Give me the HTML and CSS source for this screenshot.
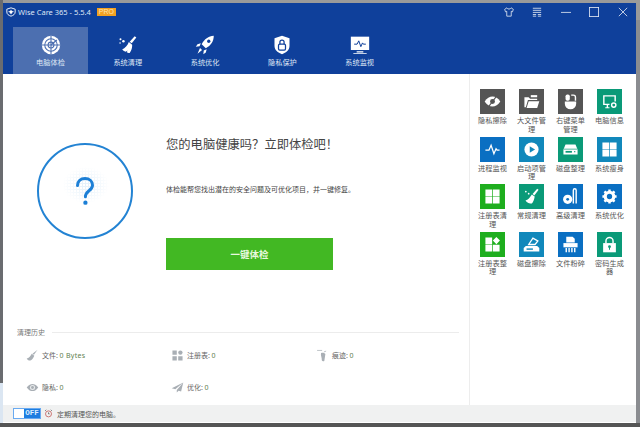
FILE: index.html
```html
<!DOCTYPE html>
<html lang="zh">
<head>
<meta charset="utf-8">
<title>Wise Care 365</title>
<link rel="stylesheet" href="styles.css">
</head>
<body>
<div class="desktop">
<div class="window">
  <header class="head">
    <div class="titlebar">
      <svg class="logo" viewBox="0 0 12 12"><path d="M6 1 11 2.600V6c0 2.600-2.200 4.200-5 5C3.200 10.200 1 8.600 1 6V2.600Z" fill="none" stroke="#fff" stroke-width="1.100"/><path d="M3 5.500h6M6 3.500v5" stroke="#fff"/><circle cx="6" cy="6" r="1.800" fill="#fff"/></svg>
      <span class="apptitle">Wise Care 365 - 5.5.4</span>
      <span class="pro">PRO</span>
      <div class="winbtns">
        <svg class="wb" viewBox="0 0 12 12"><path d="M3.500 1 .8 2.800l1 3 1.500-.6V11h5.400V5.200l1.500.6 1-3L8.500 1C7.500 3 4.500 3 3.500 1Z" fill="none" stroke="#fff"/></svg>
        <svg class="wb" viewBox="0 0 12 12"><path d="M1 1.500h10M1 4h10M1 6.500h10M1 9h4M7 9h4M1 11h4M7 11h4" stroke="#fff" fill="none"/></svg>
        <svg class="wb" viewBox="0 0 12 12"><path d="M0 6.500h12" stroke="#fff" fill="none"/></svg>
        <svg class="wb" viewBox="0 0 12 12"><rect x=".5" y=".5" width="11" height="11" fill="none" stroke="#fff"/></svg>
        <svg class="wb" viewBox="0 0 12 12"><path d="M1 1l10 10M11 1 1 11" stroke="#fff" fill="none"/></svg>
      </div>
    </div>
    <nav class="tabs">
      <div class="tab active">
        <svg class="tabicon" viewBox="0 0 24 24"><circle cx="12" cy="12" r="11" fill="#fff"/><path d="M12 1v22M1 12h22" stroke="#4c6fb0" stroke-width="1.300"/><circle cx="12" cy="12" r="7.500" fill="none" stroke="#4c6fb0" stroke-width="1.300"/><circle cx="12" cy="12" r="3.500" fill="none" stroke="#4c6fb0" stroke-width="1.300"/><path d="M12 12 19 6" stroke="#4c6fb0" stroke-width="1.500"/></svg>
        <span>电脑体检</span>
      </div>
      <div class="tab">
        <svg class="tabicon" viewBox="0 0 24 24"><path d="M20 1.500 22 3l-5.500 7-2.500-2Z" fill="#fff"/><path d="M13 8.500l4 3.200c.2 3-.8 7-3 10-2-.2-2.500-.5-3.500-1l1-2-2.200 1.500c-1.500-.5-3-1.300-4.300-2.700C8.500 16 11.500 12.500 13 8.500Z" fill="#fff"/><circle cx="3" cy="5" r="1.200" fill="#fff"/><circle cx="6.500" cy="7.500" r="1.500" fill="#fff"/><circle cx="2.500" cy="9.500" r=".9" fill="#fff"/></svg>
        <span>系统清理</span>
      </div>
      <div class="tab">
        <svg class="tabicon" viewBox="0 0 24 24"><path d="M22.500 1C16 1.500 11.500 5 8 11l5 5c6-3.500 9.500-8 9.500-15Z" fill="#fff"/><circle cx="16.500" cy="7.500" r="2" fill="#0f409b"/><path d="M7 10 3 11l-2 3 4.500-.5ZM14 17l-1 4-3 2 .5-4.500ZM6 15.500l2.500 2.500-5.500 4.500Z" fill="#fff"/></svg>
        <span>系统优化</span>
      </div>
      <div class="tab">
        <svg class="tabicon" viewBox="0 0 24 24"><path d="M12 1 21 4v9c0 5-4 8.500-9 10-5-1.500-9-5-9-10V4Z" fill="#fff"/><rect x="7.800" y="11" width="8.400" height="7" rx="1.500" fill="none" stroke="#0f409b" stroke-width="1.500"/><path d="M9.500 11V8.500a2.500 2.500 0 0 1 5 0V11" fill="none" stroke="#0f409b" stroke-width="1.500"/></svg>
        <span>隐私保护</span>
      </div>
      <div class="tab">
        <svg class="tabicon" viewBox="0 0 24 24"><rect x="1" y="2" width="22" height="16" fill="#fff"/><path d="M5 11h3.500l2-4 2.500 7 2-4.500 1 1.500h3" fill="none" stroke="#0f409b" stroke-width="1.200"/><path d="M8 19.500h8V21H8ZM4 21.500h16v1H4Z" fill="#fff"/></svg>
        <span>系统监视</span>
      </div>
    </nav>
  </header>
  <div class="body">
    <main class="main">
      <section class="hero">
        <div class="ring">
          <div class="dots"></div>
          <svg class="qmark" viewBox="0 0 24 36"><path d="M3 11.500C3 6 7 3 12 3s9 3 9 8c0 3.500-2 5-4.500 7C14 20 12.500 21 12.500 25" fill="none" stroke="#1c7fd6" stroke-width="3.600" stroke-linecap="round"/><circle cx="12.500" cy="32" r="2.600" fill="#1c7fd6"/></svg>
        </div>
        <div class="herotext">
          <h1>您的电脑健康吗？立即体检吧！</h1>
          <p>体检能帮您找出潜在的安全问题及可优化项目，并一键修复。</p>
          <button class="cta">一键体检</button>
        </div>
      </section>
      <section class="history">
        <div class="histhead"><span>清理历史</span><i></i></div>
        <div class="histgrid">
          <div class="hitem"><svg viewBox="0 0 18 18"><path d="M16 1l-5 7-2-1.500Z" fill="#a9afb5"/><path d="M8 6.500l3.500 3C10 13 8 15.500 6 16c-2 0-4-1-5-3 3 0 5-3 7-6.500Z" fill="#a9afb5"/></svg><span>文件: <b>0 Bytes</b></span></div>
          <div class="hitem"><svg viewBox="0 0 18 18"><path d="M2 2h6v6H2ZM2 10h6v6H2ZM10 10h6v6h-6Z" fill="#a9afb5"/><circle cx="13" cy="5" r="3" fill="#a9afb5"/></svg><span>注册表: <b>0</b></span></div>
          <div class="hitem"><svg viewBox="0 0 18 18"><path d="M7 5.500c3-1 5 0 6 1.500l-1.500 9.500c-1.500 1-3 .5-3.500-1C8.500 12 6 9 7 5.500Z" fill="#a9afb5"/><path d="M1.500 2h7M11 4l3-1" stroke="#a9afb5" fill="none"/></svg><span>痕迹: <b>0</b></span></div>
          <div class="hitem"><svg viewBox="0 0 18 18"><path d="M1 9c3-4 5.500-5 8-5s5 1 8 5c-3 4-5.500 5-8 5s-5-1-8-5Z" fill="#a9afb5"/><circle cx="9" cy="9" r="3.500" fill="#e9ebec"/><circle cx="9" cy="9" r="2" fill="#a9afb5"/></svg><span>隐私: <b>0</b></span></div>
          <div class="hitem"><svg viewBox="0 0 18 18"><path d="M17 2 1 10l5 1.500L17 2 8 12.500V16l2.500-2.500 3.500 1Z" fill="#a9afb5"/></svg><span>优化: <b>0</b></span></div>
        </div>
      </section>
    </main>
    <aside class="side">
      <div class="tool"><div class="ti gray"><svg viewBox="0 0 24 24"><path d="M1 12c3-5 7-7 11-7s8 2 11 7c-3 5-7 7-11 7s-8-2-11-7Z" fill="#fff"/><circle cx="12" cy="12" r="3.500" fill="#555"/><path d="M6 20 18 4" stroke="#555" stroke-width="1.500"/></svg></div><span>隐私擦除</span></div>
      <div class="tool"><div class="ti gray"><svg viewBox="0 0 24 24"><path d="M2 6h6l2 2h10v2H7L4 20H2Z" fill="#fff"/><path d="M8 11.500h15L20 21H5Z" fill="#fff"/><path d="M11 3h9v3h-9Z" fill="#fff"/></svg></div><span>大文件管理</span></div>
      <div class="tool"><div class="ti gray"><svg viewBox="0 0 24 24"><path d="M4 12h16v3a8 8 0 0 1-16 0Z" fill="#fff"/><rect x="5" y="2" width="6" height="9" rx="2.500" fill="#fff"/><path d="M13 2h3a4 4 0 0 1 4 4v5h-2V6a2 2 0 0 0-2-2h-3Z" fill="#fff"/></svg></div><span>右键菜单管理</span></div>
      <div class="tool"><div class="ti green"><svg viewBox="0 0 24 24"><path d="M3 3h18v9h-2V5H5v10h7v2H3Z" fill="#fff"/><path d="M6 20h6v1.500H6ZM8 17h2v3H8Z" fill="#fff"/><circle cx="18" cy="17" r="3" fill="none" stroke="#fff" stroke-width="2"/></svg></div><span>电脑信息</span></div>

      <div class="tool"><div class="ti blue"><svg viewBox="0 0 24 24"><path d="M2 13h5l3-7 4 12 3-7 1.500 2H22" fill="none" stroke="#fff" stroke-width="1.800"/></svg></div><span>进程监视</span></div>
      <div class="tool"><div class="ti teal"><svg viewBox="0 0 24 24"><circle cx="12" cy="12" r="10" fill="#fff"/><path d="M9.500 7.500 17 12l-7.500 4.500Z" fill="#1188bb"/></svg></div><span>启动项管理</span></div>
      <div class="tool"><div class="ti green"><svg viewBox="0 0 24 24"><path d="M5 5h14l3 7v7H2v-7Z" fill="#fff"/><path d="M2 11.500h20" stroke="#0a9a78"/><rect x="5" y="14" width="9" height="2.500" fill="#0a9a78"/><circle cx="18" cy="15" r="1" fill="#0a9a78"/></svg></div><span>磁盘整理</span></div>
      <div class="tool"><div class="ti teal"><svg viewBox="0 0 24 24"><path d="M2 2h9.500v9.500H2ZM12.500 2H22v9.500h-9.500ZM2 12.500h9.500V22H2ZM12.500 12.500H22V22h-9.500Z" fill="#fff"/></svg></div><span>系统瘦身</span></div>

      <div class="tool"><div class="ti lime"><svg viewBox="0 0 24 24"><path d="M2 2h9.500v9.500H2ZM12.500 2H22v9.500h-9.500ZM2 12.500h9.500V22H2ZM12.500 12.500H22V22h-9.500Z" fill="#fff"/></svg></div><span>注册表清理</span></div>
      <div class="tool"><div class="ti green"><svg viewBox="0 0 24 24"><path d="M20 1l2 1.500-6 8-2.500-2Z" fill="#fff"/><path d="M12.500 9l4 3c-.5 4-2 8-4 10-3 0-7-1.500-9-4.500C7 17 10 13 12.500 9Z" fill="#fff"/><circle cx="4" cy="5" r="1.200" fill="#fff"/><circle cx="8" cy="8" r="1.200" fill="#fff"/></svg></div><span>常规清理</span></div>
      <div class="tool"><div class="ti blue"><svg viewBox="0 0 24 24"><circle cx="8" cy="16" r="6.500" fill="#fff"/><circle cx="8" cy="16" r="2" fill="#0a6fc2"/><path d="M15 3a3 3 0 0 1 6 0v19h-2V3a1 1 0 0 0-2 0v19h-2Z" fill="#fff"/></svg></div><span>高级清理</span></div>
      <div class="tool"><div class="ti blue"><svg viewBox="0 0 24 24"><circle cx="12" cy="12" r="6" fill="none" stroke="#fff" stroke-width="4.500"/><path d="M12 2v4M12 18v4M2 12h4M18 12h4M4.900 4.900l2.800 2.800M16.300 16.300l2.800 2.800M19.100 4.900l-2.800 2.800M7.700 16.300l-2.800 2.800" stroke="#fff" stroke-width="3.500"/></svg></div><span>系统优化</span></div>

      <div class="tool"><div class="ti lime"><svg viewBox="0 0 24 24"><path d="M2 2h9.500v9.500H2ZM2 12.500h9.500V22H2ZM12.500 12.500H22V22h-9.500ZM17.500 1.500l5 5-5 5-5-5Z" fill="#fff"/></svg></div><span>注册表整理</span></div>
      <div class="tool"><div class="ti teal"><svg viewBox="0 0 24 24"><path d="M4 14h16l3 3v5H1v-5Z" fill="#fff"/><rect x="5" y="17.500" width="9" height="2" fill="#1188bb"/><path d="M8 12 14 3l7 4-4 5Z" fill="none" stroke="#fff" stroke-width="1.800"/></svg></div><span>磁盘擦除</span></div>
      <div class="tool"><div class="ti blue"><svg viewBox="0 0 24 24"><path d="M6 1h9l3 3v5H6Z" fill="#fff"/><path d="M2 10h20v6H2Z" fill="#fff"/><path d="M5 17h2v6H5ZM9 17h2v6H9ZM13 17h2v6h-2ZM17 17h2v6h-2Z" fill="#fff"/></svg></div><span>文件粉碎</span></div>
      <div class="tool"><div class="ti green"><svg viewBox="0 0 24 24"><rect x="3" y="10" width="18" height="13" fill="#fff"/><path d="M7 10V7a5 5 0 0 1 10 0v3" fill="none" stroke="#fff" stroke-width="2"/><circle cx="12" cy="15" r="2" fill="#0a9a78"/><path d="M11.300 16h1.400v3.500h-1.400Z" fill="#0a9a78"/></svg></div><span>密码生成器</span></div>
    </aside>
  </div>
  <footer class="foot">
    <div class="toggle"><i></i><b>OFF</b></div>
    <svg class="clock" viewBox="0 0 12 12"><circle cx="6" cy="6.500" r="4" fill="none" stroke="#c0504d"/><path d="M6 4.500v2h1.500M1.500 2.500l1.500-1.500M10.500 2.500 9 1" stroke="#555" fill="none"/></svg>
    <span>定期清理您的电脑。</span>
  </footer>
</div>
</div>
</body>
</html>
```
FILE: styles.css
```css
* { box-sizing: border-box; }
html, body { margin: 0; padding: 0; }
body { width: 640px; height: 427px; overflow: hidden; background: #55585c; font-family: "Noto Sans CJK SC", "Liberation Sans", sans-serif; }
.desktop { width: 640px; height: 427px; padding: 3px 4px 4px 3px; background:
  linear-gradient(#6a6c70 0 383px, #dbe6f2 383px 423px, #555 423px) left top / 3px 100% no-repeat,
  linear-gradient(#9a9a9a 0 20px, #8a8c90 20px 423px, #555 423px); }
.window { width: 633px; height: 420px; display: flex; flex-direction: column; background: #fff; }
.head { height: 71px; background: #0f409b; flex: none; }
.titlebar { height: 18px; display: flex; align-items: center; padding-left: 3px; color: #dfe7f5; }
.logo { width: 10px; height: 10px; flex: none; }
.apptitle { font: 7.500px "Noto Sans", "Liberation Sans", sans-serif; margin-left: 2px; white-space: nowrap; }
.pro { margin-left: 6px; background: #f2a122; color: #fde4b5; font: 7px "Liberation Sans", sans-serif; width: 19px; height: 8px; line-height: 8px; text-align: center; }
.winbtns { margin-left: auto; display: flex; gap: 18.600px; padding-right: 8px; opacity: .88; }
.wb { width: 10px; height: 10px; display: block; }
.tabs { display: flex; padding-left: 10px; height: 47px; margin-top: 6px; }
.tab { width: 75px; height: 47px; margin-right: 2.300px; flex: none; display: flex; flex-direction: column; align-items: center; padding-top: 8px; color: #dfe7f5; font-size: 7.200px; line-height: 10px; }
.tab.active { background: #4c6fb0; }
.tabicon { width: 20px; height: 20px; margin-bottom: 2px; flex: none; }
.body { flex: 1; display: flex; min-height: 0; }
.main { width: 467px; flex: none; display: flex; flex-direction: column; border-right: 1px solid #ededed; }
.hero { height: 253px; display: flex; padding: 69px 0 0 34px; flex: none; }
.ring { width: 96px; height: 96px; border: 2px solid #2383d3; border-radius: 50%; display: flex; align-items: center; justify-content: center; position: relative; flex: none; }
.dots { position: absolute; left: 24px; top: 22px; width: 46px; height: 36px; background: radial-gradient(circle, rgba(255,255,255,0) 0 1px, #fff 1.400px) 0 0 / 3px 3px, radial-gradient(ellipse, #e3f0fa 0, #fff 72%); }
.qmark { width: 20px; height: 32px; position: relative; }
.herotext { margin-left: 33px; width: 220px; }
h1 { margin: -9px 0 0; font-weight: 400; font-size: 12.300px; line-height: 20px; color: #444; white-space: nowrap; }
p { margin: 30px 0 0; font-size: 7px; line-height: 11px; color: #444; white-space: nowrap; }
.cta { display: block; margin: 43px 0 0; width: 167px; height: 32px; background: #42b823; border: 0; color: #e8f8df; font: 700 9.500px "Noto Sans CJK SC", sans-serif; padding: 0; }
.history { padding: 0 8px 0 14px; flex: 1; }
.histhead { display: flex; align-items: center; gap: 7px; font-size: 7px; line-height: 11px; color: #777; }
.histhead i { flex: 1; height: 1px; background: #ececec; margin-right: 2px; }
.histgrid { display: grid; grid-template-columns: 145px 145px 145px; grid-auto-rows: 31.500px; padding: 11px 0 0 9px; }
.hitem { display: flex; align-items: flex-start; gap: 3px; font-size: 7px; line-height: 13px; color: #666; }
.hitem svg { width: 13px; height: 13px; flex: none; }
.hitem b { font: 400 7px "Noto Sans", "Noto Sans CJK SC", sans-serif; color: #5f7f4f; letter-spacing: .3px; }
.side { flex: 1; display: grid; grid-template-columns: repeat(4, 39px); grid-auto-rows: 47.500px; padding: 15px 0 0 3px; align-content: start; }
.tool { display: flex; flex-direction: column; align-items: center; font-size: 7.200px; line-height: 8.500px; color: #555; text-align: center; width: 39px; }
.tool span { width: 30px; }
.ti { width: 25px; height: 25px; flex: none; display: flex; align-items: center; justify-content: center; margin-bottom: 2px; }
.ti svg { width: 17px; height: 17px; }
.gray { background: #555; }
.green { background: #0a9a78; }
.blue { background: #0a6fc2; }
.teal { background: #1188bb; }
.lime { background: #1eae1e; }
.foot { height: 18px; flex: none; background: #f0f1f1; border-bottom: 1px solid #fff; display: flex; align-items: center; padding-left: 10px; font-size: 7px; color: #555; }
.toggle { width: 28px; height: 11px; display: flex; border: 1px solid #6aaaf0; background: #fff; }
.toggle i { width: 10px; }
.toggle b { flex: 1; background: #1e7de0; color: #dfefff; font: 700 7.500px "Liberation Mono", monospace; line-height: 9px; text-align: center; }
.clock { width: 9px; height: 9px; margin: 0 4px 0 3px; }
```
